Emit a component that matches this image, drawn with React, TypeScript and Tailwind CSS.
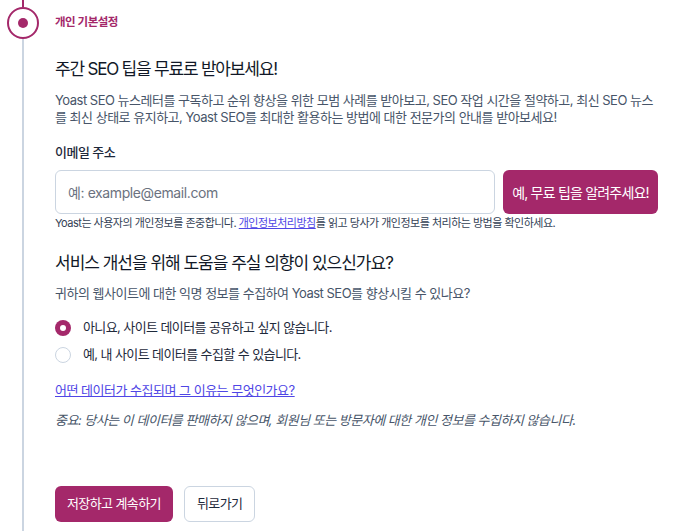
import React, { useState } from 'react'

const font = { fontFamily: 'Inter, "Noto Sans CJK KR", sans-serif' }

export default function App() {
  const [share, setShare] = useState<'no' | 'yes'>('no')

  return (
    <div className="relative h-[531px] w-[677px] overflow-hidden bg-white text-[#1e293b]" style={font}>
      {/* step rail */}
      <div className="absolute left-[22px] top-0 h-[7px] w-[2px] bg-[#a4286a]" />
      <div className="absolute left-[22px] top-[39px] bottom-0 w-[2px] bg-[#cbd5e1]" />
      <div className="absolute left-[7px] top-[7px] flex h-[32px] w-[32px] items-center justify-center rounded-full border-2 border-[#a4286a] bg-white">
        <div className="h-[10px] w-[10px] rounded-full bg-[#a4286a]" />
      </div>

      <div className="flex flex-col pl-[55px] pr-[19px]">
        <div className="flex h-[45px] items-center">
          <span className="text-[11.5px] font-semibold tracking-[-0.5px] text-[#a4286a]">개인 기본설정</span>
        </div>

        <h2 className="mt-[12px] text-[17px] font-normal leading-[24px] tracking-[-1.2px] text-[#111827]">
          주간 SEO 팁을 무료로 받아보세요!
        </h2>
        <p className="mt-[11px] text-[13px] leading-[17px] tracking-[-0.5px] text-[#475569]">
          Yoast SEO 뉴스레터를 구독하고 순위 향상을 위한 모범 사례를 받아보고, SEO 작업 시간을 절약하고, 최신 SEO 뉴스를 최신 상태로 유지하고, Yoast SEO를 최대한 활용하는 방법에 대한 전문가의 안내를 받아보세요!
        </p>

        <label className="mt-[17px] text-[13px] font-medium leading-[18px] tracking-[-0.5px] text-[#1e293b]">이메일 주소</label>
        <div className="mt-[9px] flex gap-[8px]">
          <input
            placeholder="예: example@email.com"
            className="h-[44px] flex-1 rounded-[6px] border border-[#cbd5e1] px-[12px] text-[14px] tracking-[-0.4px] text-[#1e293b] outline-none placeholder:text-[#6b7280]"
          />
          <button className="h-[44px] w-[155px] rounded-[6px] bg-[#a4286a] text-[14px] font-normal tracking-[-0.8px] text-white">
            예, 무료 팁을 알려주세요!
          </button>
        </div>
        <p className="mt-[1px] text-[11px] leading-[16px] tracking-[-0.5px] text-[#334155]">
          Yoast는 사용자의 개인정보를 존중합니다.{' '}
          <a href="#" className="text-[#4f46e5] underline">개인정보처리방침</a>를 읽고 당사가 개인정보를 처리하는 방법을 확인하세요.
        </p>

        <h2 className="mt-[20px] text-[17px] font-normal leading-[24px] tracking-[-1px] text-[#111827]">
          서비스 개선을 위해 도움을 주실 의향이 있으신가요?
        </h2>
        <p className="mt-[9px] text-[13px] leading-[18px] tracking-[-0.5px] text-[#475569]">
          귀하의 웹사이트에 대한 익명 정보를 수집하여 Yoast SEO를 향상시킬 수 있나요?
        </p>

        <div className="mt-[17px] flex flex-col gap-[9px]">
          {[
            { key: 'no' as const, label: '아니요, 사이트 데이터를 공유하고 싶지 않습니다.' },
            { key: 'yes' as const, label: '예, 내 사이트 데이터를 수집할 수 있습니다.' },
          ].map((o) => (
            <label key={o.key} className="flex h-[18px] cursor-pointer items-center gap-[12px]" onClick={() => setShare(o.key)}>
              {share === o.key ? (
                <span className="flex h-[16px] w-[16px] items-center justify-center rounded-full bg-[#a4286a]">
                  <span className="h-[6px] w-[6px] rounded-full bg-white" />
                </span>
              ) : (
                <span className="h-[16px] w-[16px] rounded-full border border-[#cbd5e1] bg-white" />
              )}
              <span className="text-[13px] tracking-[-0.6px] text-[#1e293b]">{o.label}</span>
            </label>
          ))}
        </div>

        <a href="#" className="mt-[17px] self-start text-[13px] leading-[18px] tracking-[-0.5px] text-[#4f46e5] underline">
          어떤 데이터가 수집되며 그 이유는 무엇인가요?
        </a>
        <p className="mt-[12px] text-[13px] italic leading-[18px] tracking-[-0.5px] text-[#475569]">
          중요: 당사는 이 데이터를 판매하지 않으며, 회원님 또는 방문자에 대한 개인 정보를 수집하지 않습니다.
        </p>

        <div className="mt-[57px] flex gap-[11px]">
          <button className="h-[36px] rounded-[6px] bg-[#a4286a] px-[12px] text-[13px] font-normal tracking-[-0.6px] text-white">
            저장하고 계속하기
          </button>
          <button className="h-[36px] rounded-[6px] border border-[#cbd5e1] bg-white px-[12px] text-[13px] font-normal tracking-[-0.6px] text-[#1e293b]">
            뒤로가기
          </button>
        </div>
      </div>
    </div>
  )
}
